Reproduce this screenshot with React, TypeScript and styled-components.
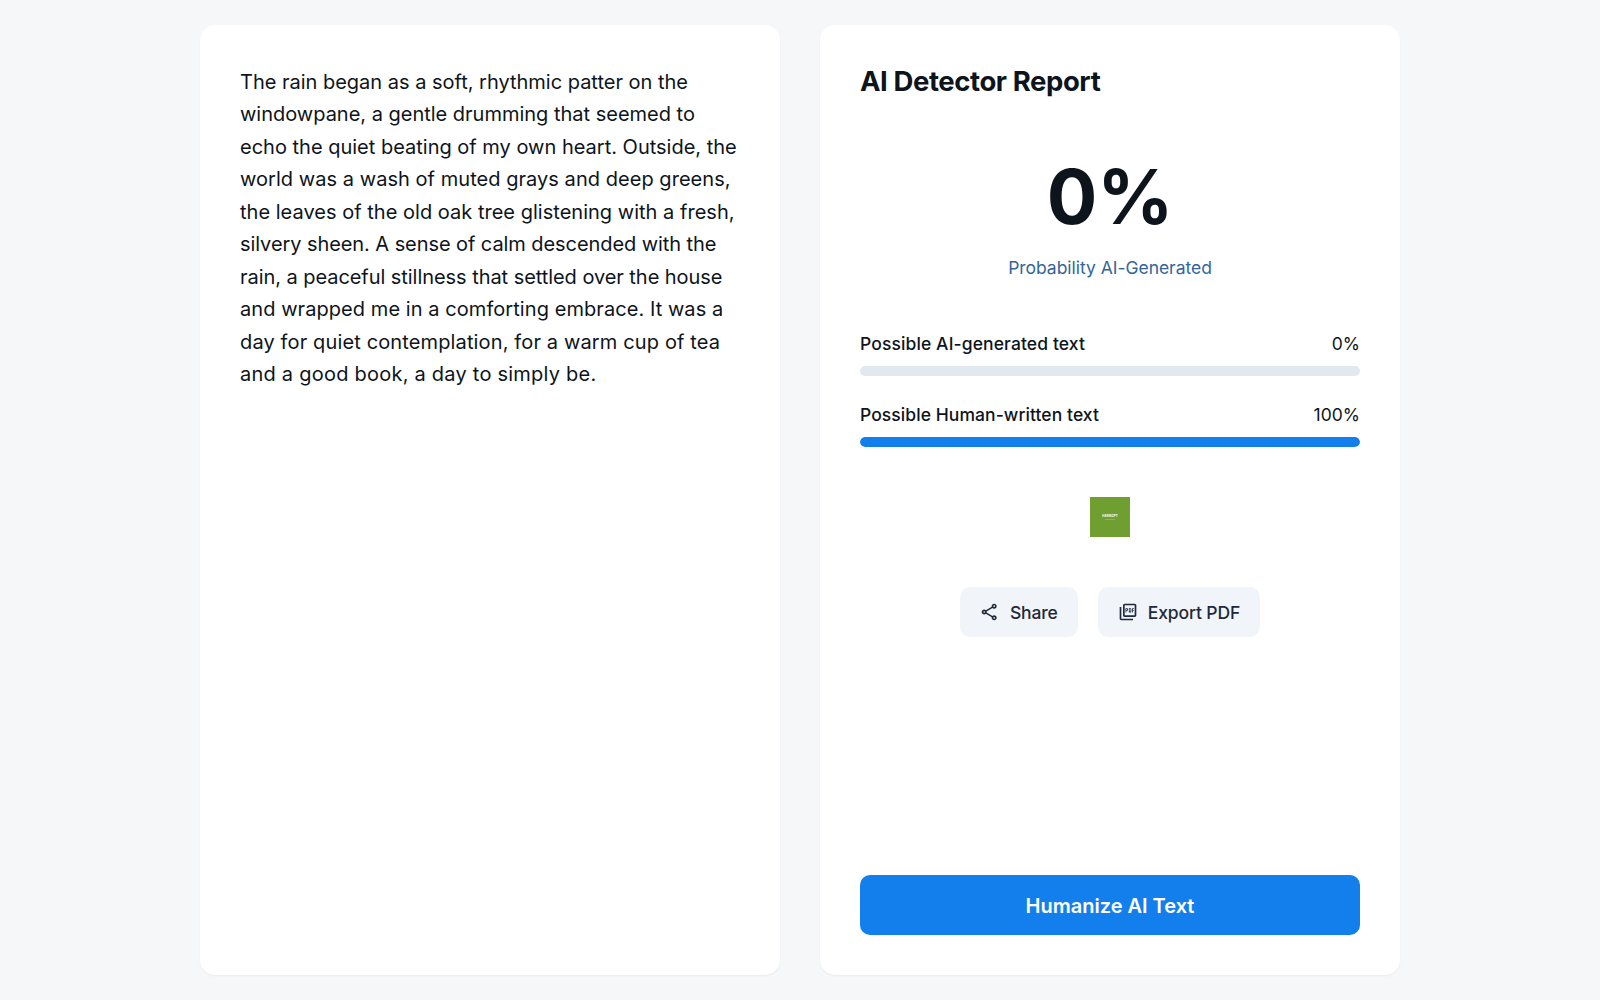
import React from "react";
import styled, { createGlobalStyle } from "styled-components";

const Global = createGlobalStyle`
  *, *::before, *::after { box-sizing: border-box; }
  body { margin: 0; background: #f6f7f8; font-family: Inter, "Liberation Sans", sans-serif; color: #0d141b; }
  h1, p { margin: 0; }
`;

const Page = styled.main`
  height: 1000px;
  display: grid;
  grid-template-columns: 580px 580px;
  gap: 40px;
  justify-content: center;
  padding: 25px 0;
`;

const Card = styled.section`
  display: flex;
  flex-direction: column;
  padding: 40px;
  background: #fff;
  border-radius: 15px;
  box-shadow: 0 1px 2px rgba(0, 0, 0, 0.05);
`;

const Passage = styled.p`
  padding-top: 0.9px;
  font-size: 20px;
  line-height: 32.5px;
  white-space: nowrap;
`;

const Line = styled.span<{ $tracking: number }>`
  display: block;
  letter-spacing: ${(p) => p.$tracking}px;
`;

const Title = styled.h1`
  font-size: 27.5px;
  line-height: 32px;
  font-weight: 700;
  letter-spacing: -0.42px;
`;

const Score = styled.div`
  display: flex;
  flex-direction: column;
  align-items: center;
  margin-top: 62px;
`;

const Percent = styled.p`
  font-size: 75px;
  line-height: 75px;
  font-weight: 700;
`;

const Caption = styled.p`
  margin-top: 21px;
  font-size: 17.5px;
  line-height: 25px;
  letter-spacing: -0.03px;
  color: #33659a;
`;

const Meters = styled.div`
  display: flex;
  flex-direction: column;
  gap: 25px;
  margin-top: 50px;
`;

const MeterHead = styled.div`
  display: flex;
  justify-content: space-between;
  padding-top: 1px;
  font-size: 17.5px;
  line-height: 26px;
`;

const MeterLabel = styled.span<{ $tracking: number }>`
  font-weight: 500;
  letter-spacing: ${(p) => p.$tracking}px;
`;

const Track = styled.div`
  height: 10px;
  margin-top: 9px;
  border-radius: 5px;
  overflow: hidden;
  background: #e2e8f0;
`;

const Fill = styled.div`
  height: 100%;
  border-radius: 5px;
  background: #137fec;
`;

const Badge = styled.div`
  width: 40px;
  height: 40px;
  display: flex;
  flex-direction: column;
  align-items: center;
  justify-content: center;
  align-self: center;
  margin-top: 50px;
  background: #6f9f30;
  color: #fff;
`;

const BadgeName = styled.span`
  font-size: 3px;
  line-height: 4px;
  font-weight: 700;
`;

const BadgeRule = styled.span`
  width: 10px;
  height: 1px;
  margin-top: 1px;
  background: rgba(255, 255, 255, 0.2);
`;

const Actions = styled.div`
  display: flex;
  justify-content: center;
  gap: 20px;
  margin-top: 50px;
`;

const Action = styled.button`
  height: 50px;
  display: flex;
  align-items: center;
  gap: 10px;
  padding: 0 20px;
  border: 0;
  border-radius: 10px;
  background: #f1f5f9;
  color: #1e293b;
  font: 500 17.5px/25px Inter, sans-serif;
  letter-spacing: -0.12px;
`;

const Primary = styled.button`
  height: 60px;
  margin-top: auto;
  padding-top: 2px;
  border: 0;
  border-radius: 10px;
  background: #137fec;
  color: #fff;
  font: 600 20px/30px Inter, sans-serif;
`;

const lines = [
  { text: "The rain began as a soft, rhythmic patter on the", tracking: -0.01 },
  { text: "windowpane, a gentle drumming that seemed to", tracking: -0.01 },
  { text: "echo the quiet beating of my own heart. Outside, the", tracking: 0 },
  { text: "world was a wash of muted grays and deep greens,", tracking: 0.044 },
  { text: "the leaves of the old oak tree glistening with a fresh,", tracking: 0.02 },
  { text: "silvery sheen. A sense of calm descended with the", tracking: -0.074 },
  { text: "rain, a peaceful stillness that settled over the house", tracking: -0.055 },
  { text: "and wrapped me in a comforting embrace. It was a", tracking: 0.064 },
  { text: "day for quiet contemplation, for a warm cup of tea", tracking: 0.135 },
  { text: "and a good book, a day to simply be.", tracking: 0.235 },
];

const meters = [
  { label: "Possible AI-generated text", value: 0, tracking: 0.11 },
  { label: "Possible Human-written text", value: 100, tracking: 0.07 },
];

const ShareIcon = () => (
  <svg width="20" height="20" viewBox="0 -960 960 960" fill="currentColor">
    <path d="M680-80q-50 0-85-35t-35-85q0-6 3-28L282-392q-16 15-37 23.500t-45 8.500q-50 0-85-35t-35-85q0-50 35-85t85-35q24 0 45 8.500t37 23.500l281-164q-2-7-2.500-13.500T560-760q0-50 35-85t85-35q50 0 85 35t35 85q0 50-35 85t-85 35q-24 0-45-8.500T598-672L317-508q2 7 2.500 13.500t.5 14.500q0 8-.5 14.500T317-452l281 164q16-15 37-23.500t45-8.500q50 0 85 35t35 85q0 50-35 85t-85 35Zm0-80q17 0 28.500-11.500T720-200q0-17-11.500-28.500T680-240q-17 0-28.500 11.500T640-200q0 17 11.500 28.500T680-160ZM200-440q17 0 28.500-11.500T240-480q0-17-11.500-28.500T200-520q-17 0-28.500 11.500T160-480q0 17 11.500 28.500T200-440Zm480-280q17 0 28.500-11.500T720-760q0-17-11.500-28.500T680-800q-17 0-28.500 11.500T640-760q0 17 11.500 28.500T680-720Z" />
  </svg>
);

const PdfIcon = () => (
  <svg width="20" height="20" viewBox="0 -960 960 960" fill="currentColor">
    <path d="M360-460h40v-80h40q17 0 28.500-11.500T480-580v-40q0-17-11.500-28.500T440-660h-80v200Zm40-120v-40h40v40h-40Zm120 120h80q17 0 28.500-11.500T640-500v-120q0-17-11.500-28.500T600-660h-80v200Zm40-40v-120h40v120h-40Zm120 40h40v-80h40v-40h-40v-40h40v-40h-80v200ZM320-240q-33 0-56.500-23.500T240-320v-480q0-33 23.500-56.500T320-880h480q33 0 56.500 23.500T880-800v480q0 33-23.500 56.500T800-240H320Zm0-80h480v-480H320v480ZM160-80q-33 0-56.500-23.500T80-160v-560h80v560h560v80H160Zm160-720v480-480Z" />
  </svg>
);

export default function App() {
  return (
    <>
      <Global />
      <Page>
        <Card>
          <Passage>
            {lines.map((l) => (
              <Line key={l.text} $tracking={l.tracking}>{l.text}</Line>
            ))}
          </Passage>
        </Card>
        <Card>
          <Title>AI Detector Report</Title>
          <Score>
            <Percent>0%</Percent>
            <Caption>Probability AI-Generated</Caption>
          </Score>
          <Meters>
            {meters.map((m) => (
              <div key={m.label}>
                <MeterHead>
                  <MeterLabel $tracking={m.tracking}>{m.label}</MeterLabel>
                  <span>{m.value}%</span>
                </MeterHead>
                <Track>
                  <Fill style={{ width: `${m.value}%` }} />
                </Track>
              </div>
            ))}
          </Meters>
          <Badge>
            <BadgeName>HABIBGPT</BadgeName>
            <BadgeRule />
          </Badge>
          <Actions>
            <Action><ShareIcon />Share</Action>
            <Action><PdfIcon />Export PDF</Action>
          </Actions>
          <Primary>Humanize AI Text</Primary>
        </Card>
      </Page>
    </>
  );
}
